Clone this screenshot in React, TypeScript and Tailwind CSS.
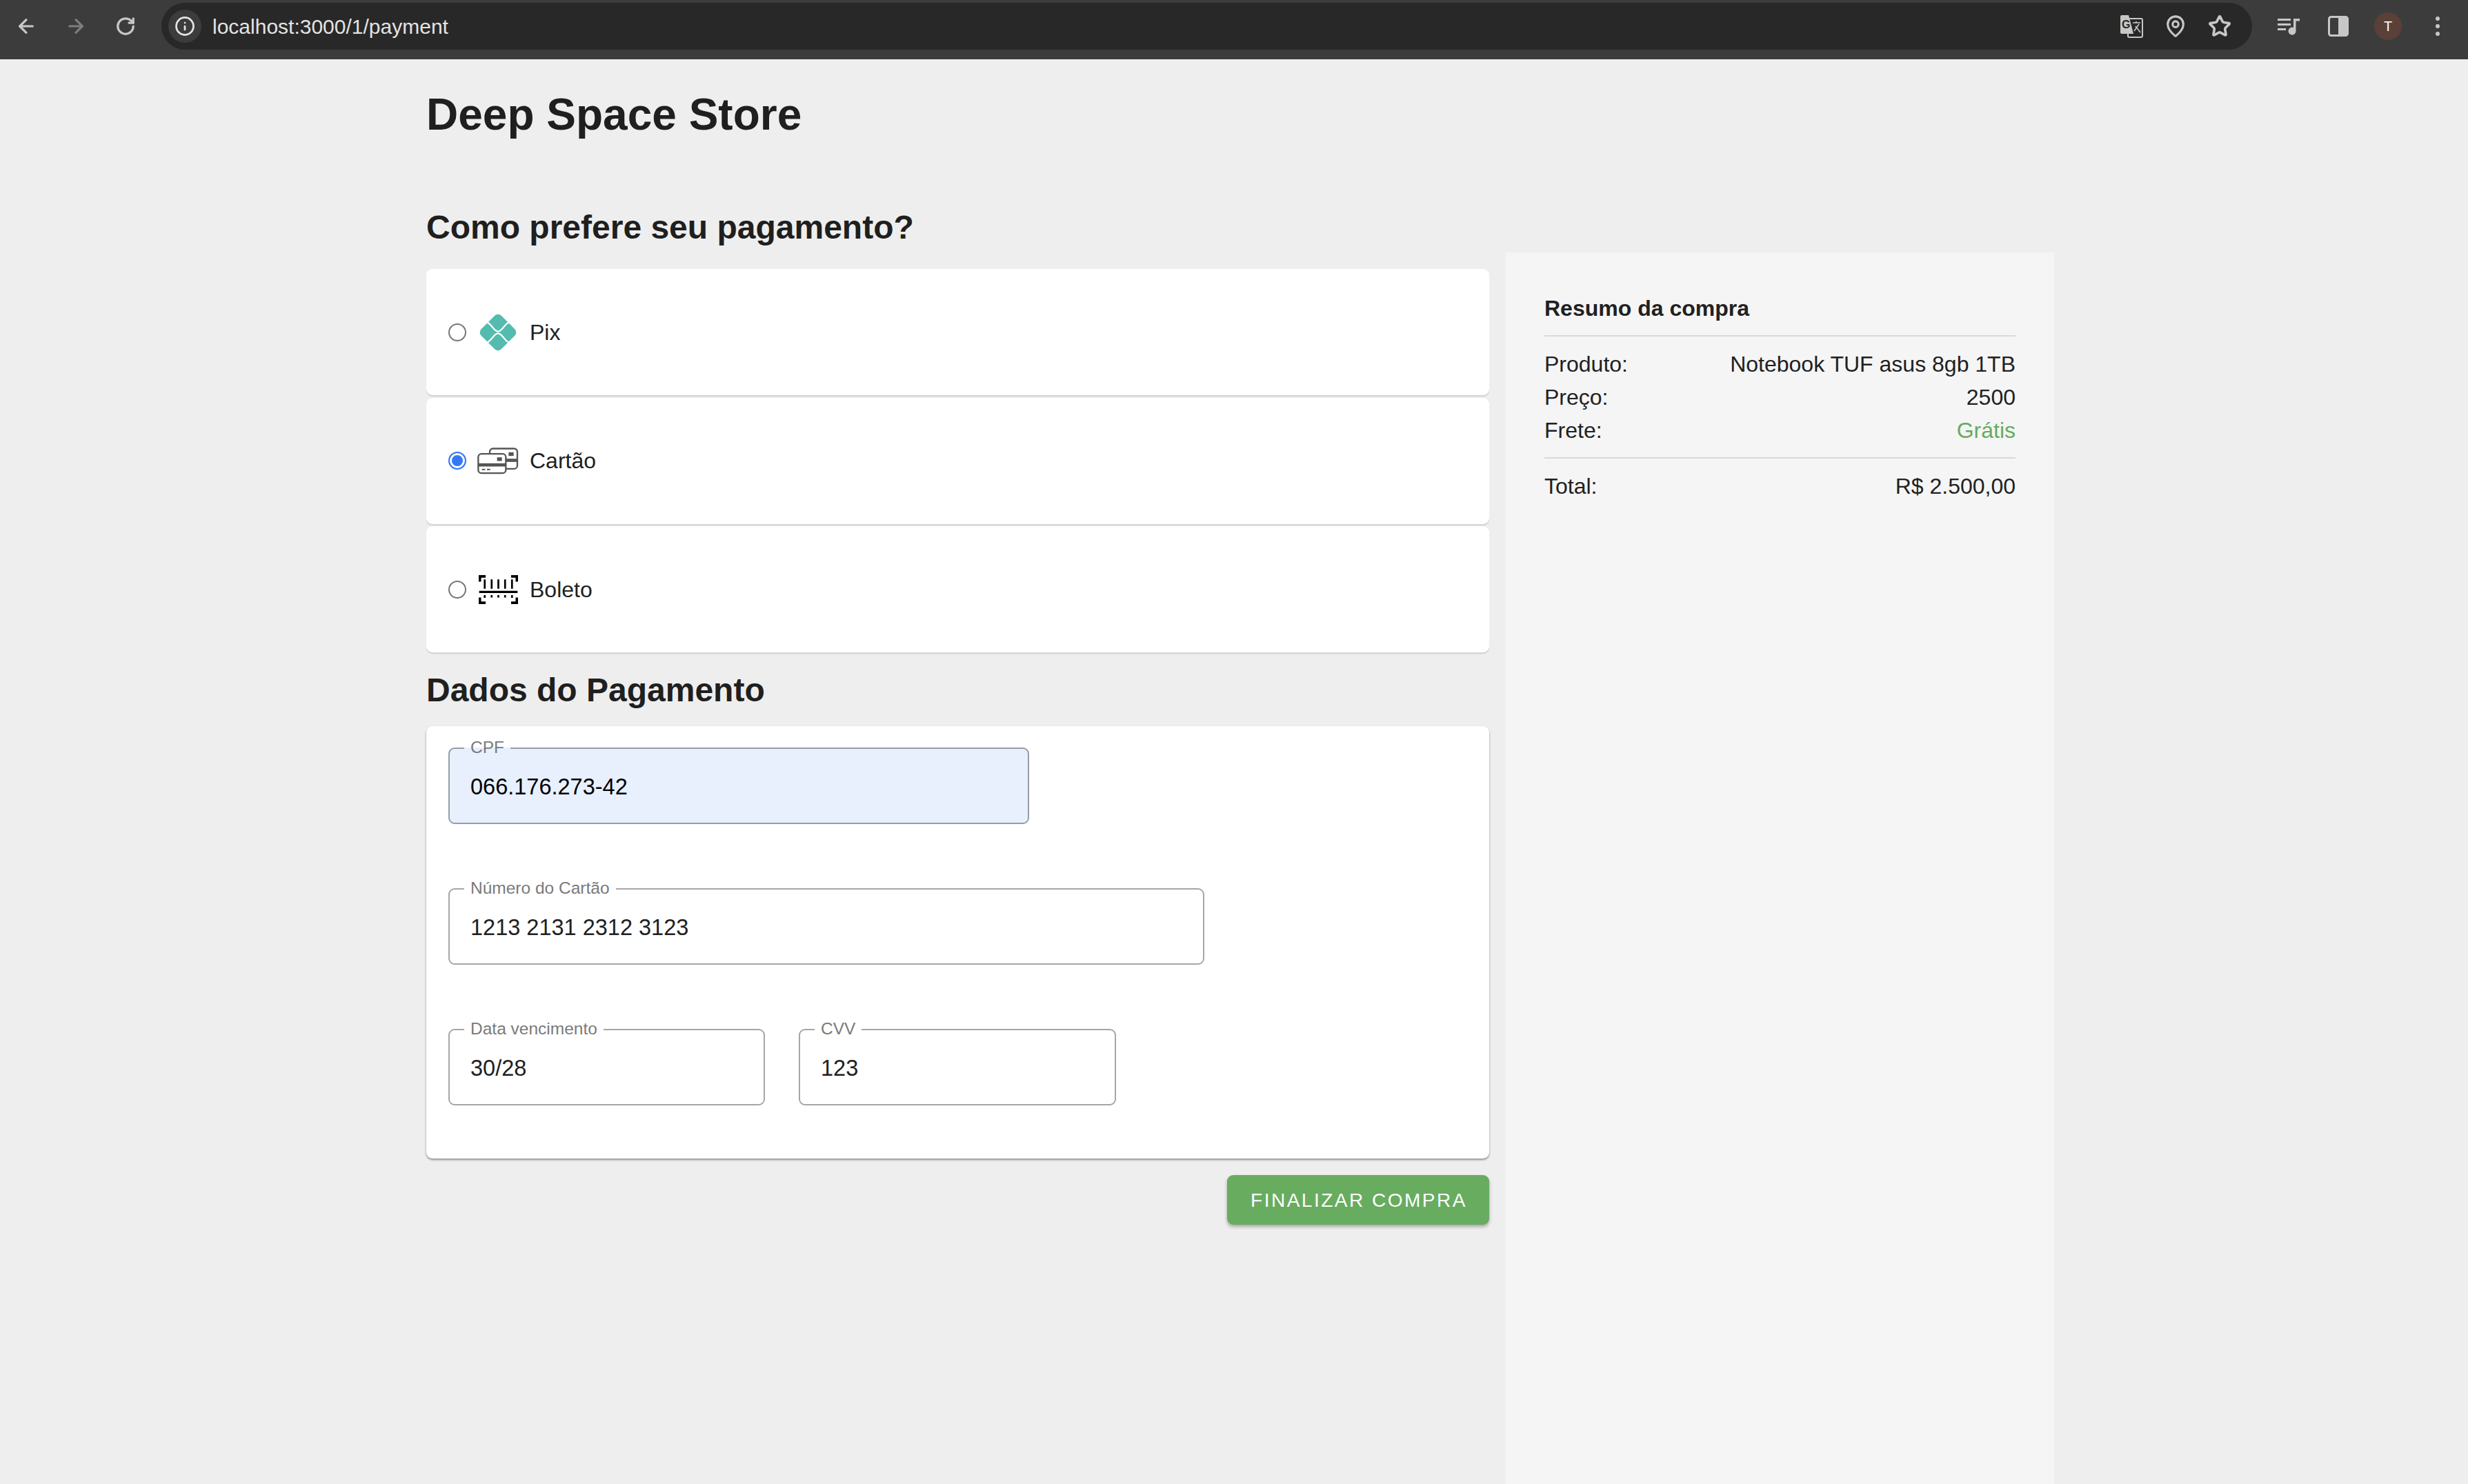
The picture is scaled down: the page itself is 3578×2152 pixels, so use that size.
import { ArrowLeft, ArrowRight, RotateCw, Info, MapPin, Star } from 'lucide-react';

const font = "font-['Liberation_Sans',Arial,sans-serif]";

function PixIcon() {
  return (
    <svg width="54" height="54" viewBox="0 0 160 160">
      <rect x="19" y="19" width="122" height="122" rx="20" fill="#54bcae" transform="rotate(45 80 80)" />
      <path d="M28 36 C50 36 60 76 80 76 C100 76 110 36 132 36" fill="none" stroke="#fff" strokeWidth="7" />
      <path d="M28 124 C50 124 60 84 80 84 C100 84 110 124 132 124" fill="none" stroke="#fff" strokeWidth="7" />
    </svg>
  );
}

function CardsIcon() {
  return (
    <svg width="60" height="39" viewBox="0 0 180 116">
      <rect x="54" y="4" width="120" height="88" rx="14" fill="#fff" stroke="#555" strokeWidth="7" />
      <rect x="124" y="48" width="50" height="14" fill="#555" />
      <rect x="136" y="20" width="22" height="16" fill="#555" />
      <rect x="4" y="27" width="120" height="84" rx="14" fill="#fff" stroke="#555" strokeWidth="7" />
      <rect x="4" y="68" width="120" height="14" fill="#555" />
      <rect x="86" y="42" width="21" height="16" fill="#555" />
      <rect x="20" y="92" width="14" height="6" fill="#555" />
      <rect x="42" y="92" width="14" height="6" fill="#555" />
    </svg>
  );
}

function BarcodeIcon() {
  return (
    <svg width="57" height="42" viewBox="0 0 170 124" fill="none" stroke="#000">
      <path d="M5 28 V5 H30 M140 5 H165 V28 M5 96 V119 H30 M140 119 H165 V96" strokeWidth="11" />
      <path d="M26 18 V58 M56 18 V58 M85 18 V58 M114 18 V58 M144 18 V58" strokeWidth="8" />
      <path d="M2 72 H168" strokeWidth="10" />
      <path d="M26 86 V98 M56 86 V96 M85 86 V96 M114 86 V96 M144 86 V98" strokeWidth="8" />
    </svg>
  );
}

function TranslateIcon() {
  return (
    <svg width="34" height="34" viewBox="0 0 34 34">
      <rect x="12" y="6" width="21" height="27" rx="2" fill="none" stroke="#c7c7c7" strokeWidth="2" />
      <path d="M1 3 a2 2 0 0 1 2-2 H13 L20 28 H3 a2 2 0 0 1-2-2 Z" fill="#c7c7c7" />
      <text x="3" y="20" fontSize="16" fontWeight="700" fill="#282828" fontFamily="Liberation Sans">G</text>
      <path d="M19 12 H30 M24 10 V12 M21 24 L28 14 M23 17 L30 26" fill="none" stroke="#c7c7c7" strokeWidth="1.6" />
    </svg>
  );
}

function MediaIcon() {
  return (
    <svg width="34" height="30" viewBox="0 0 34 30" fill="#c7c7c7">
      <rect x="1" y="4" width="19" height="3" />
      <rect x="1" y="11" width="19" height="3" />
      <rect x="1" y="18" width="12" height="3" />
      <path d="M24 4 H33 V7.5 H27.5 V22 A5.5 5.5 0 1 1 24 17 Z" />
    </svg>
  );
}

function SidePanelIcon() {
  return (
    <svg width="30" height="30" viewBox="0 0 30 30">
      <rect x="1.5" y="1.5" width="27" height="27" rx="3" fill="none" stroke="#c7c7c7" strokeWidth="3" />
      <rect x="15" y="2" width="13" height="26" fill="#c7c7c7" />
    </svg>
  );
}

function BrowserBar() {
  return (
    <div className="flex h-[86px] shrink-0 items-start bg-[#3c3c3c] pl-[18px] pr-[24px] pt-[4px] text-[#c7c7c7]">
      <div className="flex h-[68px] items-center gap-[32px]">
        <div className="flex w-[40px] justify-center"><ArrowLeft size={32} strokeWidth={2.4} /></div>
        <div className="flex w-[40px] justify-center text-[#7d7d7d]"><ArrowRight size={32} strokeWidth={2.4} /></div>
        <div className="flex w-[40px] justify-center"><RotateCw size={30} strokeWidth={2.6} /></div>
      </div>
      <div className="ml-[32px] flex h-[68px] flex-1 items-center rounded-full bg-[#282828] pl-[10px] pr-[27px]">
        <div className="flex h-[48px] w-[48px] items-center justify-center rounded-full bg-[#3c3c3c] text-[#e3e3e3]">
          <Info size={30} strokeWidth={2.2} />
        </div>
        <span className={`ml-[16px] flex-1 text-[30px] text-[#e3e3e3] ${font}`}>localhost:3000/1/payment</span>
        <div className="flex items-center gap-[24px]">
          <div className="flex w-[40px] justify-center"><TranslateIcon /></div>
          <div className="flex w-[40px] justify-center"><MapPin size={34} strokeWidth={2.2} /></div>
          <div className="flex w-[40px] justify-center"><Star size={34} strokeWidth={2.6} /></div>
        </div>
      </div>
      <div className="ml-[33px] flex h-[68px] items-center gap-[32px]">
        <div className="flex w-[40px] justify-center"><MediaIcon /></div>
        <div className="flex w-[40px] justify-center"><SidePanelIcon /></div>
        <div className={`flex h-[40px] w-[40px] items-center justify-center rounded-full bg-[#5b4037] text-[20px] text-white ${font}`}>T</div>
        <div className="flex w-[40px] flex-col items-center gap-[5px]">
          <span className="h-[6px] w-[6px] rounded-full bg-[#c7c7c7]" />
          <span className="h-[6px] w-[6px] rounded-full bg-[#c7c7c7]" />
          <span className="h-[6px] w-[6px] rounded-full bg-[#c7c7c7]" />
        </div>
      </div>
    </div>
  );
}

function PaymentOption({ label, icon, checked }: { label: string; icon: React.ReactNode; checked?: boolean }) {
  return (
    <label className="flex h-[183px] items-center rounded-[9px] bg-white pl-[32px] shadow-[0_2.5px_0_#d6d6d6]">
      <input
        type="radio"
        name="payment"
        defaultChecked={checked}
        className="h-[26px] w-[26px] appearance-none rounded-full border-2 border-[#767676] checked:border-[#3478f6] checked:bg-[#3478f6] checked:shadow-[inset_0_0_0_3px_#fff]"
      />
      <span className="ml-[16px] flex w-[60px] justify-center">{icon}</span>
      <span className="ml-[16px] text-[32px] text-[#212121]">{label}</span>
    </label>
  );
}

function Field({ label, value, width, filled }: { label: string; value: string; width: string; filled?: boolean }) {
  return (
    <div className={`relative h-[111px] ${width}`}>
      <input
        readOnly
        value={value}
        className={`h-full w-full rounded-[9px] px-[32px] pt-[3px] text-[32.5px] outline-none ${filled ? 'bg-[#e8f0fe] text-black' : 'bg-white text-[#212121]'}`}
      />
      <fieldset className={`pointer-events-none absolute inset-x-0 -top-[12px] bottom-0 rounded-[9px] border-2 ${filled ? 'border-[#989ca6]' : 'border-[#a6a6a6]'}`}>
        <legend className="invisible ml-[21px] h-[26px] px-[9px] text-[24.5px] leading-[26px]">{label}</legend>
      </fieldset>
      <span className="absolute left-[32px] -top-[14px] text-[24.5px] leading-[28px] text-[#7a7a7a]">{label}</span>
    </div>
  );
}

function SummaryRow({ label, value, green }: { label: string; value: string; green?: boolean }) {
  return (
    <div className="flex h-[48px] items-center justify-between text-[32px] text-[#212121]">
      <span>{label}</span>
      <span className={green ? 'text-[#66ab5e]' : ''}>{value}</span>
    </div>
  );
}

export default function App() {
  return (
    <div className={`flex h-screen flex-col overflow-hidden bg-[#eeeeee] ${font}`}>
      <BrowserBar />
      <main className="flex flex-1 flex-col pl-[618px]">
        <h1 className="mt-[40px] h-[80px] text-[64px] font-bold leading-[80px] text-[#1f1f1f]">Deep Space Store</h1>
        <div className="mt-[93px] flex flex-1 gap-[24px]">
          <div className="flex w-[1541px] flex-col">
            <h2 className="mb-[31px] h-[60px] pt-[1px] text-[48px] font-bold leading-[60px] text-[#1f1f1f]">Como prefere seu pagamento?</h2>
            <div className="flex flex-col gap-[3.5px]">
              <PaymentOption label="Pix" icon={<PixIcon />} />
              <PaymentOption label="Cartão" icon={<CardsIcon />} checked />
              <PaymentOption label="Boleto" icon={<BarcodeIcon />} />
            </div>
            <h2 className="mb-[22px] mt-[25px] h-[60px] text-[48px] font-bold leading-[60px] text-[#1f1f1f]">Dados do Pagamento</h2>
            <div className="flex flex-col gap-[93px] rounded-[9px] bg-white pb-[77px] pl-[32px] pt-[31px] shadow-[0_2px_3px_rgba(0,0,0,0.4)]">
              <Field label="CPF" value="066.176.273-42" width="w-[842px]" filled />
              <Field label="Número do Cartão" value="1213 2131 2312 3123" width="w-[1096px]" />
              <div className="flex gap-[49px]">
                <Field label="Data vencimento" value="30/28" width="w-[459px]" />
                <Field label="CVV" value="123" width="w-[460px]" />
              </div>
            </div>
            <button className="mt-[24px] h-[72px] w-[380px] self-end rounded-[9px] bg-[#68ac5f] pl-[2px] pt-[2px] text-[28px] tracking-[2.5px] text-white shadow-[0_3px_5px_rgba(0,0,0,0.3)]">
              FINALIZAR COMPRA
            </button>
          </div>
          <aside className="mt-[67px] w-[795px] bg-[#f5f5f5] px-[56px] pt-[61px]">
            <h3 className="h-[40px] text-[32px] font-bold leading-[40px] text-[#212121]">Resumo da compra</h3>
            <hr className="mb-[16px] mt-[19px] border-t-[2px] border-[#d9d9d9]" />
            <SummaryRow label="Produto:" value="Notebook TUF asus 8gb 1TB" />
            <SummaryRow label="Preço:" value="2500" />
            <SummaryRow label="Frete:" value="Grátis" green />
            <hr className="mb-[16px] mt-[15px] border-t-[2px] border-[#d9d9d9]" />
            <SummaryRow label="Total:" value="R$ 2.500,00" />
          </aside>
        </div>
      </main>
    </div>
  );
}
